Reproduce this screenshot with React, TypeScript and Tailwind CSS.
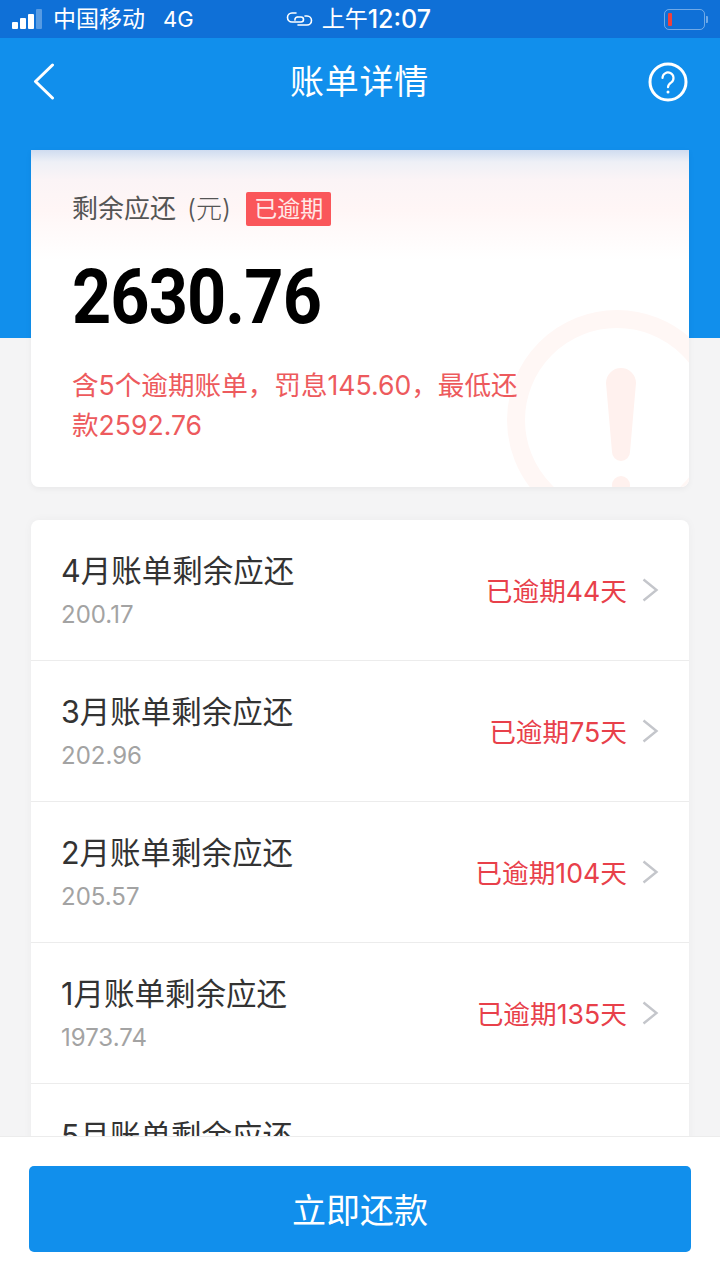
import React from 'react';

const cjk = { fontFamily: '"Inter", "Noto Sans CJK SC", sans-serif' };

const bills = [
  { title: '4月账单剩余应还', amount: '200.17', overdue: '已逾期44天' },
  { title: '3月账单剩余应还', amount: '202.96', overdue: '已逾期75天' },
  { title: '2月账单剩余应还', amount: '205.57', overdue: '已逾期104天' },
  { title: '1月账单剩余应还', amount: '1973.74', overdue: '已逾期135天' },
  { title: '5月账单剩余应还', amount: '2630.76', overdue: '' },
];

function StatusBar() {
  return (
    <div className="flex h-[38px] items-center bg-[#0f70d7] pl-[12px] pr-[12px] text-white">
      <div className="flex w-[33px] items-end gap-[2px]">
        <span className="h-[7px] w-[6px] rounded-[1px] bg-white" />
        <span className="h-[11px] w-[6px] rounded-[1px] bg-white" />
        <span className="h-[15px] w-[6px] rounded-[1px] bg-white" />
        <span className="h-[20px] w-[6px] rounded-[1px] bg-white/30" />
      </div>
      <span className="ml-[8px] text-[23px] leading-none">中国移动</span>
      <span className="ml-[18px] text-[22px] leading-none">4G</span>
      <svg className="ml-[92px]" width="27" height="18" viewBox="0 0 27 18" fill="none" stroke="white" strokeWidth="1.6" strokeLinecap="round">
        <path d="M10 3H6a4.500 4.500 0 0 0 0 9h9a2.500 2.500 0 0 0 0-5h-3" />
        <path d="M9 10a2.500 2.500 0 0 1 2.500-3" />
        <path d="M12 15h9a4.500 4.500 0 0 0 0-9h-2" />
      </svg>
      <span className="ml-[9px] text-[23px] leading-none">上午</span>
      <span className="text-[25px] font-medium leading-none">12:07</span>
      <div className="ml-auto flex items-center gap-[1px]">
        <div className="flex h-[21px] w-[41px] items-center rounded-[5px] border border-white/40 pl-[3px]">
          <span className="h-[13px] w-[4px] rounded-[1px] bg-[#f0413c]" />
        </div>
        <span className="h-[7px] w-[2px] rounded-r-[1px] bg-white/40" />
      </div>
    </div>
  );
}

function BillRow({ title, amount, overdue, last }: { title: string; amount: string; overdue: string; last: boolean }) {
  return (
    <div className={`flex h-[141px] items-center pl-[30px] pr-[30px] ${last ? '' : 'border-b border-[#ececec]'}`}>
      <div className="flex-1 pt-[2px]">
        <div className="text-[30.500px] leading-[40px] text-[#333333]">{title}</div>
        <div className="mt-[8px] text-[24px] leading-[32px] text-[#a3a3a3]">{amount}</div>
      </div>
      {overdue && <span className="pt-[2px] text-[26.700px] leading-none text-[#e8404a]">{overdue}</span>}
      {overdue && (
        <svg className="ml-[14px]" width="18" height="26" viewBox="0 0 18 26" fill="none" stroke="#c4c6cb" strokeWidth="2.4">
          <path d="M2.500 2.500 15.500 13 2.500 23.500" />
        </svg>
      )}
    </div>
  );
}

export default function App() {
  return (
    <div className="relative h-[1280px] w-[720px] overflow-hidden bg-[#f4f4f5]" style={cjk}>
      <StatusBar />
      <div className="h-[300px] bg-[#118fec]">
        <div className="flex h-[88px] items-center justify-between pl-[33px] pr-[32px] text-white">
          <div className="w-[38px]">
            <svg width="22" height="38" viewBox="0 0 22 38" fill="none" stroke="white" strokeWidth="3" strokeLinecap="round" strokeLinejoin="round">
              <path d="M19.500 2 2.500 18.500 19.500 35" />
            </svg>
          </div>
          <span className="tracking-[0.800px] text-[34px] leading-none">账单详情</span>
          <svg width="40" height="40" viewBox="0 0 40 40" fill="none" stroke="white" strokeWidth="3">
            <circle cx="20" cy="20" r="18" />
            <path d="M14.500 16a5.500 5.500 0 1 1 8.800 4.400c-2 1.400-3.300 2.400-3.300 4.800" strokeWidth="2.200" strokeLinecap="round" />
            <circle cx="20" cy="30" r="1.500" fill="white" stroke="none" />
          </svg>
        </div>
      </div>

      <div className="relative z-10 mx-[31px] mt-[-188px] h-[337px] overflow-hidden rounded-b-[8px] bg-[linear-gradient(#cfdcf0_0px,#eef0f6_12px,#fbf4f6_30px,#fff6f6_60px,#ffffff_110px)] pl-[41px] pt-[42px] shadow-[0_2px_6px_rgba(0,0,0,0.05)]">
        <svg className="absolute right-[-38px] top-[160px]" width="220" height="220" viewBox="0 0 220 220" fill="none">
          <circle cx="110" cy="110" r="101" stroke="#fff7f5" strokeWidth="18" />
          <path d="M99 73a15 15 0 0 1 30 0l-6 69a9 9 0 0 1-18 0z" fill="#fff1ee" />
          <circle cx="114" cy="175" r="9" fill="#fff1ee" />
        </svg>
        <div className="relative flex items-center">
          <span className="text-[26px] leading-[34px] text-[#555555]">剩余应还</span>
          <span className="ml-[11px] text-[26px] font-light leading-[34px] text-[#555555]">(元)</span>
          <span className="ml-[15px] rounded-[2px] bg-[#fa565a] px-[8px] text-[23px] leading-[34px] text-[#ffe9e8]">已逾期</span>
        </div>
        <div className="relative mt-[29px] origin-left scale-x-[0.9] font-['Roboto'] text-[76px] font-bold leading-[84px] tracking-[-1px] text-black">2630.76</div>
        <p className="relative mt-[26px] w-[450px] text-[26.600px] leading-[40px] text-[#ed5a5d]">
          含5个逾期账单，罚息145.60，最低还款2592.76
        </p>
      </div>

      <div className="mx-[31px] mt-[33px] overflow-hidden rounded-t-[8px] bg-white shadow-[0_0_10px_rgba(0,0,0,0.04)]">
        {bills.map((b, i) => (
          <BillRow key={b.title} title={b.title} amount={b.amount} overdue={b.overdue} last={i === bills.length - 1} />
        ))}
      </div>

      <div className="absolute bottom-0 left-0 right-0 z-20 h-[144px] border-t border-[#ececec] bg-white px-[29px] pt-[29px]">
        <button className="h-[86px] w-full rounded-[5px] bg-[#118fec] pt-[4px] text-[34px] leading-none text-white">立即还款</button>
      </div>
    </div>
  );
}
